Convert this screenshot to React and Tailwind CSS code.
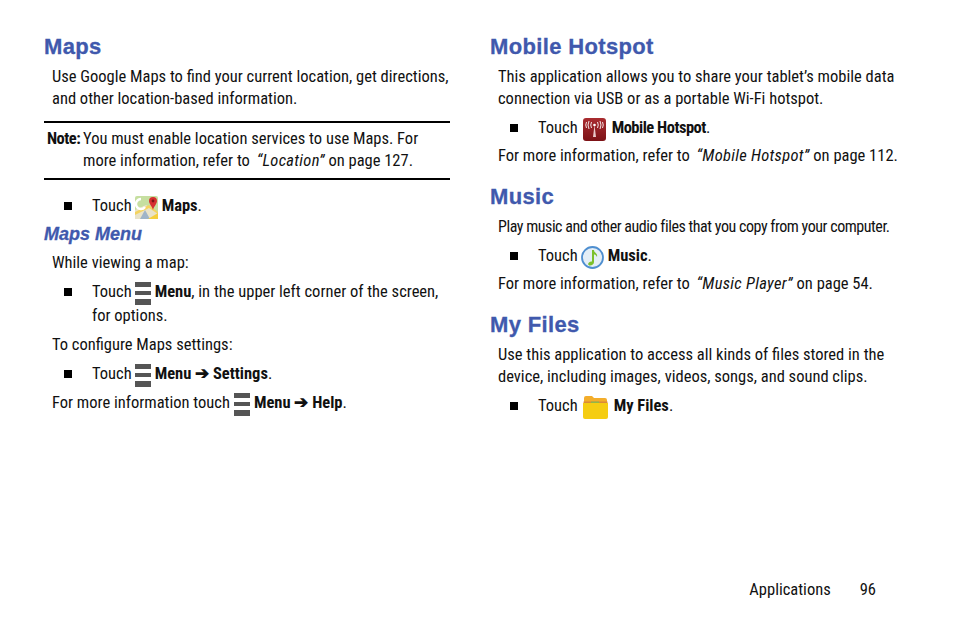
import React from 'react';

const MenuIcon = ({ className = 'ml-[3px]' }) => (
  <svg className={`inline-block align-[-8px] mr-1 ${className}`} width="16" height="23" viewBox="0 0 16 23">
    <rect y="0" width="16" height="5" fill="#555" />
    <rect y="9" width="16" height="4" fill="#555" />
    <rect y="17" width="16" height="6" fill="#555" />
  </svg>
);

const MapsIcon = () => (
  <svg className="inline-block align-[-8px] ml-[3px] mr-1" width="23" height="23" viewBox="0 0 23 23">
    <rect width="23" height="23" rx="2" fill="#c6dfa0" />
    <path d="M0 23V14L11 9l12 8v6z" fill="#e9e3c8" />
    <path d="M0 16L14 9l9 7v2l-9-6L0 19z" fill="#f4d35e" />
    <path d="M5 23l5-9 5 9z" fill="#9fb4c8" />
    <path d="M13 23l10-6v6z" fill="#f5cf3c" />
    <path d="M6 3a5 5 0 1 0 4 8" fill="none" stroke="#fff" strokeWidth="2.500" />
    <path d="M18 1a4 4 0 0 1 4 4c0 3-3 5-4 9-1-4-4-6-4-9a4 4 0 0 1 4-4z" fill="#d62f2f" />
    <circle cx="18" cy="5" r="1.400" fill="#7a1414" />
  </svg>
);

const HotspotIcon = () => (
  <svg className="inline-block align-[-8px] ml-[5px] mr-1.5" width="23" height="23" viewBox="0 0 23 23">
    <defs>
      <linearGradient id="hot" x1="0" y1="0" x2="0" y2="1">
        <stop offset="0" stopColor="#a92c30" />
        <stop offset="1" stopColor="#7c1216" />
      </linearGradient>
    </defs>
    <rect width="23" height="23" rx="3" fill="url(#hot)" />
    <path d="M11.500 7L10 19h3z" fill="#e9c9c9" />
    <circle cx="11.500" cy="7" r="1.300" fill="#fff" />
    <path d="M8.500 4q-1.500 3 0 6M14.500 4q1.500 3 0 6M6 3q-2 4 0 8M17 3q2 4 0 8M3.500 4q-1.500 3 0 6M19.500 4q1.500 3 0 6" fill="none" stroke="#f3e3e3" strokeWidth="1" />
  </svg>
);

const MusicIcon = () => (
  <svg className="inline-block align-[-8px] ml-[3px] mr-1" width="23" height="23" viewBox="0 0 23 23">
    <circle cx="11.500" cy="11.500" r="10.500" fill="#e4eef6" stroke="#4f8fd0" strokeWidth="1.800" />
    <path d="M11 4h2c0 3 4 3 3 7-1-2-2-2.500-3-2.500V16c0 2-2 3.500-4 3.500s-2.500-2-1-3c1-1 2-1.200 3-1z" fill="#7cc02c" />
  </svg>
);

const FolderIcon = () => (
  <svg className="inline-block align-[-8px] ml-[5px] mr-1.5" width="25" height="23" viewBox="0 0 25 23">
    <path d="M1 6V2a2 2 0 0 1 2-2h6l2 2h11a2 2 0 0 1 2 2v3z" fill="#f3ad2b" />
    <rect x="0.500" y="5.500" width="24" height="1.500" fill="#d98a3a" />
    <rect x="8" y="5.500" width="8" height="1.500" fill="#8fb84a" />
    <path d="M0 7h25v14a2 2 0 0 1-2 2H2a2 2 0 0 1-2-2z" fill="#f5cd12" />
  </svg>
);

const Heading = ({ children, className = '' }) => (
  <h2 className={`font-['Liberation_Sans',sans-serif] text-[22px] leading-[26px] font-bold tracking-[0.35px] text-[#4059ad] [-webkit-text-stroke:0.3px_#4059ad] ${className}`}>{children}</h2>
);

const Body = ({ children, className = '' }) => (
  <p className={`pl-2 text-[16.5px] leading-[22px] font-stretch-[81%] ${className}`}>{children}</p>
);

const Strong = ({ children, className = '' }) => <b className={`font-stretch-[80%] ${className}`}>{children}</b>;

const Quote = ({ children }) => <i className="pl-[3px] font-stretch-[85%] tracking-[0.3px]">{children}</i>;

const Bullet = ({ children, className = '' }) => (
  <div className={`flex pl-5 text-[16.5px] leading-[22px] font-stretch-[81%] ${className}`}>
    <span className="w-7 shrink-0 pt-[7px]">
      <span className="block w-2 h-2 bg-black" />
    </span>
    <p className="flex-1">{children}</p>
  </div>
);

const App = () => {
  return (
    <div className="w-[954px] h-[636px] bg-white text-[#111] font-['Roboto',sans-serif] flex flex-col overflow-hidden">
      <div className="flex pl-[44px] pt-[34px] gap-10 flex-1">
        {/* Left column */}
        <div className="w-[406px]">
          <Heading>Maps</Heading>
          <Body className="mt-[6px]">Use Google Maps to find your current location, get directions, and other location-based information.</Body>
          <div className="mt-[11px] border-y-2 border-black pt-[5px] pb-[6px] pl-[3px] flex text-[16.5px] leading-[22px] font-stretch-[81%]">
            <span className="w-9 shrink-0"><Strong className="tracking-[-0.5px]">Note:</Strong></span>
            <p>You must enable location services to use Maps. For more information, refer to <Quote>“Location”</Quote> on page 127.</p>
          </div>
          <Bullet className="mt-[15px]">Touch<MapsIcon /><Strong>Maps</Strong>.</Bullet>
          <h3 className="mt-[3px] font-['Liberation_Sans',sans-serif] text-[18px] leading-[24px] font-bold italic text-[#4059ad] [-webkit-text-stroke:0.3px_#4059ad]">Maps Menu</h3>
          <Body className="mt-[6px]">While viewing a map:</Body>
          <Bullet className="mt-[7px]">Touch<MenuIcon /><Strong>Menu</Strong>, in the upper left corner of the screen, for options.</Bullet>
          <Body className="mt-[7px]">To configure Maps settings:</Body>
          <Bullet className="mt-[7px]">Touch<MenuIcon /><Strong>Menu ➔ Settings</Strong>.</Bullet>
          <Body className="mt-[5px]">For more information touch<MenuIcon className="ml-1" /><Strong>Menu ➔ Help</Strong>.</Body>
        </div>

        {/* Right column */}
        <div className="w-[406px]">
          <Heading>Mobile Hotspot</Heading>
          <Body className="mt-[6px]">This application allows you to share your tablet’s mobile data connection via USB or as a portable Wi-Fi hotspot.</Body>
          <Bullet className="mt-[7px]">Touch<HotspotIcon /><Strong className="tracking-[-0.5px]">Mobile Hotspot</Strong>.</Bullet>
          <Body className="mt-[4px] whitespace-nowrap">For more information, refer to <Quote>“Mobile Hotspot”</Quote> on page 112.</Body>
          <Heading className="mt-[17px]">Music</Heading>
          <p className="mt-[6px] pl-2 text-[16px] leading-[22px] font-stretch-[75%] tracking-[-0.45px] whitespace-nowrap">Play music and other audio files that you copy from your computer.</p>
          <Bullet className="mt-[7px]">Touch<MusicIcon /><Strong>Music</Strong>.</Bullet>
          <Body className="mt-[4px]">For more information, refer to <Quote>“Music Player”</Quote> on page 54.</Body>
          <Heading className="mt-[17px]">My Files</Heading>
          <Body className="mt-[6px]">Use this application to access all kinds of files stored in the device, including images, videos, songs, and sound clips.</Body>
          <Bullet className="mt-[7px]">Touch<FolderIcon /><Strong>My Files</Strong>.</Bullet>
        </div>
      </div>

      {/* Footer */}
      <div className="flex justify-end pr-[78px] pb-[35px] gap-[29px] text-[16.5px] leading-[22px] font-stretch-[81%]">
        <span>Applications</span>
        <span>96</span>
      </div>
    </div>
  );
};

export default App;
